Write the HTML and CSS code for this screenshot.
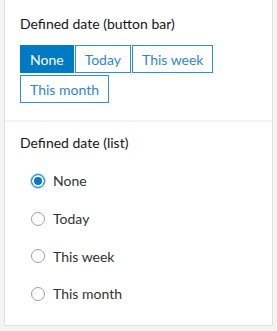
FILE: index.html
```html
<!DOCTYPE html>
<html lang="en">
<head>
    <meta charset="UTF-8">
    <title>Defined date</title>
    <link rel="stylesheet" href="styles.css">
</head>
<body>
    <div class="panel">
        <div class="section">
            <div class="label">Defined date (button bar)</div>
            <div class="button-bar">
                <button class="seg active">None</button>
                <button class="seg">Today</button>
                <button class="seg">This week</button>
                <button class="seg">This month</button>
            </div>
        </div>
        <div class="section list">
            <div class="label">Defined date (list)</div>
            <div class="radios">
                <label class="radio checked"><span class="dot"></span>None</label>
                <label class="radio"><span class="dot"></span>Today</label>
                <label class="radio"><span class="dot"></span>This week</label>
                <label class="radio"><span class="dot"></span>This month</label>
            </div>
        </div>
    </div>
</body>
</html>
```

FILE: styles.css
```css
body {
    margin: 0;
    padding: 0 4px 4px 4px;
    background: #f4f4f4;
    font-family: Lato, sans-serif;
    color: #151515;
}
.panel {
    background: #f3f3f3;
    border: 1px solid #e0e0e0;
    border-top: none;
    height: 326px;
    box-sizing: border-box;
    display: flex;
    flex-direction: column;
    gap: 2px;
}
.section {
    background: white;
    padding: 15px 15px 0 15px;
    height: 120px;
    box-sizing: border-box;
}
.section.list {
    flex: 1;
    padding-top: 12px;
}
.label {
    font-size: 14px;
    line-height: 18px;
    margin-bottom: 12px;
}
.section.list .label {
    margin-bottom: 10px;
}
.button-bar {
    display: flex;
    flex-wrap: wrap;
    gap: 2px 1px;
}
.seg {
    font-family: inherit;
    font-size: 14px;
    height: 28px;
    padding: 0 9px;
    background: white;
    color: #2f86c8;
    border: 1px solid #2f8fd0;
    margin: 0;
    cursor: pointer;
}
.seg.active {
    background: #007ac2;
    border-color: #007ac2;
    color: white;
}
.radios {
    display: flex;
    flex-direction: column;
    padding-left: 11px;
}
.radio {
    display: flex;
    align-items: center;
    gap: 8px;
    height: 37.7px;
    font-size: 14px;
    color: #323232;
}
.dot {
    width: 14px;
    height: 14px;
    border-radius: 50%;
    border: 1px solid #a0a0a0;
    box-sizing: border-box;
    background: white;
}
.radio.checked .dot {
    border-color: #2f8fd0;
    background: #007ac2;
    box-shadow: inset 0 0 0 2px white, 0 0 0 1px #c2def2;
}
```
